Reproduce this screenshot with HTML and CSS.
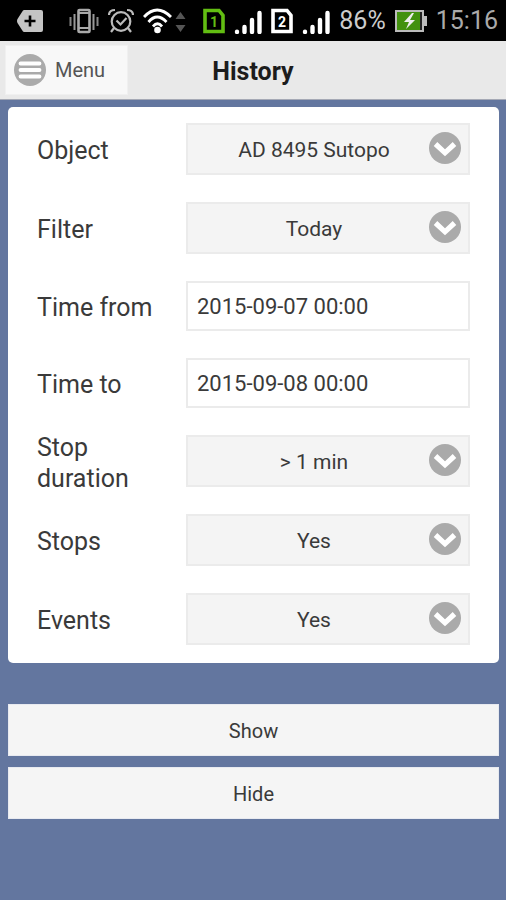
FILE: index.html
```html
<!DOCTYPE html>
<html lang="en">
<head>
<meta charset="utf-8">
<meta name="viewport" content="width=device-width, initial-scale=1">
<title>History</title>
<link rel="stylesheet" href="styles.css">
</head>
<body>
<svg class="defs" aria-hidden="true">
  <symbol id="arrow" viewBox="0 0 32 32">
    <circle cx="16" cy="16" r="16" fill="#aaa"/>
    <path d="M6.500 12 16 20.800 25.500 12" fill="none" stroke="#fff" stroke-width="5.200"/>
  </symbol>
  <symbol id="signal" viewBox="0 0 28 26">
    <g stroke="#fff" stroke-width="4.4" stroke-linecap="round">
      <path d="M3 23.800v.2M10.500 19v5M18 12v12M25.500 5v19"/>
    </g>
  </symbol>
</svg>

<div class="status">
  <svg class="status-add" width="26" height="22" viewBox="0 0 26 22" aria-hidden="true">
    <path d="M7 0h17q2 0 2 2v18q0 2-2 2H7q-1 0-2-2L.5 13q-1-2 0-4L5 2q1-2 2-2z" fill="#c4c4c4"/>
    <path d="M13 5.500v11M7.500 11h11" stroke="#000" stroke-width="2.600"/>
  </svg>
  <svg width="30" height="26" viewBox="0 0 30 26" aria-hidden="true">
    <rect x="9.500" y="2" width="11" height="22" rx="1" fill="none" stroke="#aaa" stroke-width="2.600"/>
    <path d="M10 5h10M10 20h10" stroke="#aaa" stroke-width="2"/>
    <path d="M5.500 6v16M24.500 6v16" stroke="#999" stroke-width="2"/>
    <path d="M1.500 9v9M28.500 9v9" stroke="#888" stroke-width="2"/>
  </svg>
  <svg width="26" height="26" viewBox="0 0 26 26" aria-hidden="true">
    <g fill="none" stroke="#bbb" stroke-width="2.200">
      <circle cx="13" cy="13.500" r="9.300"/>
      <path d="M8.500 12.500l4 4 6-6.500M6 20l-3 4M20 20l3 4"/>
      <path d="M1 7Q1 2 7 2M25 7Q25 2 19 2"/>
    </g>
  </svg>
  <svg width="43" height="26" viewBox="0 0 43 26" aria-hidden="true">
    <g fill="none" stroke="#fff" stroke-width="2.800">
      <path d="M1 9Q14 -5 28 9M5.500 14Q14 4 23.500 14M10 18.500Q14.500 13 19 18.500"/>
    </g>
    <circle cx="14.500" cy="22" r="3.300" fill="#fff"/>
    <path d="M37.500 4l5 7h-10zM37.500 24l5-7h-10z" fill="#555"/>
  </svg>
  <svg class="sim" width="22" height="26" viewBox="0 0 22 26" role="img" aria-label="SIM 1">
    <path d="M2 2.500h14l4 5v16H2z" fill="#000" stroke="#62bd12" stroke-width="3.600"/>
    <text class="sim-green" x="11" y="19">1</text>
  </svg>
  <svg width="28" height="26" aria-hidden="true"><use href="#signal"/></svg>
  <svg class="sim" width="22" height="26" viewBox="0 0 22 26" role="img" aria-label="SIM 2">
    <path d="M2 2.500h14l4 5v16H2z" fill="#000" stroke="#fff" stroke-width="3.600"/>
    <text class="sim-white" x="11" y="19">2</text>
  </svg>
  <svg width="28" height="26" aria-hidden="true"><use href="#signal"/></svg>
  <span class="level">86%</span>
  <svg width="32" height="22" viewBox="0 0 32 22" aria-hidden="true">
    <rect x="1" y="1" width="27" height="20" fill="#42910e" stroke="#bbb" stroke-width="2"/>
    <rect x="25" y="2" width="2" height="18" fill="#222"/>
    <rect x="29" y="6" width="3" height="10" fill="#bbb"/>
    <path d="M17 3 9 12h5l-3 7 9-9h-5l4-7z" fill="#eee"/>
  </svg>
  <span class="clock">15:16</span>
</div>

<header class="header">
  <button class="menu" type="button">
    <svg width="32" height="32" viewBox="0 0 32 32" aria-hidden="true">
      <circle cx="16" cy="16" r="16" fill="#aaa"/>
      <path d="M6.500 9.500h19M6.500 16h19M6.500 22.500h19" stroke="#fff" stroke-width="3.800" stroke-linecap="round"/>
    </svg>
    Menu
  </button>
  <h1 class="title">History</h1>
</header>

<main>
  <form class="form">
    <div class="card">
      <div class="row">
        <label for="object">Object</label>
        <div class="field"><select id="object"><option>AD 8495 Sutopo</option></select><svg class="arrow" aria-hidden="true"><use href="#arrow"/></svg></div>
      </div>
      <div class="row">
        <label for="filter">Filter</label>
        <div class="field"><select id="filter"><option>Today</option></select><svg class="arrow" aria-hidden="true"><use href="#arrow"/></svg></div>
      </div>
      <div class="row">
        <label for="from">Time from</label>
        <input id="from" type="text" value="2015-09-07 00:00">
      </div>
      <div class="row">
        <label for="to">Time to</label>
        <input id="to" type="text" value="2015-09-08 00:00">
      </div>
      <div class="row">
        <label class="two-line" for="duration">Stop duration</label>
        <div class="field"><select id="duration"><option>&gt; 1 min</option></select><svg class="arrow" aria-hidden="true"><use href="#arrow"/></svg></div>
      </div>
      <div class="row">
        <label for="stops">Stops</label>
        <div class="field"><select id="stops"><option>Yes</option><option>No</option></select><svg class="arrow" aria-hidden="true"><use href="#arrow"/></svg></div>
      </div>
      <div class="row">
        <label for="events">Events</label>
        <div class="field"><select id="events"><option>Yes</option><option>No</option></select><svg class="arrow" aria-hidden="true"><use href="#arrow"/></svg></div>
      </div>
    </div>
    <div class="actions">
      <button class="action" type="button">Show</button>
      <button class="action" type="button">Hide</button>
    </div>
  </form>
</main>
</body>
</html>
```

FILE: styles.css
```css
* {
  box-sizing: border-box;
}

body {
  margin: 0;
  min-height: 100vh;
  background: #63769f;
  color: #3a3a3a;
  font-family: Roboto, "Liberation Sans", sans-serif;
}

button,
input,
select {
  font-family: inherit;
  color: inherit;
}

.defs {
  position: absolute;
  width: 0;
  height: 0;
}

.status {
  display: flex;
  align-items: center;
  justify-content: flex-end;
  gap: 9px;
  height: 41px;
  padding: 0 8px 0 17px;
  background: #000;
  color: #ccc;
  font-size: 25px;
}

.status svg {
  flex: none;
}

.status .status-add {
  margin-right: auto;
}

.sim {
  margin-left: 8px;
}

.sim ~ .sim {
  margin-left: 0;
}

.sim text {
  font-size: 14px;
  font-weight: 700;
  text-anchor: middle;
}

.sim-green {
  fill: #62bd12;
}

.sim-white {
  fill: #fff;
}

.clock {
  color: #aaa;
}

.header {
  display: grid;
  grid-template-columns: 1fr auto 1fr;
  align-items: center;
  height: 59px;
  padding: 0 5px;
  background: #e9e9e9;
  border-bottom: 1px solid #a5a9b5;
}

.menu {
  display: flex;
  align-items: center;
  justify-self: start;
  gap: 9px;
  height: 50px;
  padding: 0 22px 0 8px;
  border: 1px solid #f0f0f0;
  background: #f8f8f8;
  color: #555;
  font-size: 20px;
}

.title {
  margin: 0;
  padding-top: 3px;
  color: #1c1c1c;
  font-size: 25px;
  font-weight: 700;
}

.form {
  padding: 7px 7px 0 8px;
}

.card {
  display: grid;
  gap: 27px;
  padding: 16px 29px 18px;
  border-radius: 5px;
  background: #fff;
}

.row {
  display: grid;
  grid-template-columns: 149px 1fr;
  align-items: center;
}

.row label {
  padding: 3px 24px 0 0;
  font-size: 25px;
  line-height: 31px;
}

.row .two-line {
  margin: -7px 0;
}

.field {
  position: relative;
  display: grid;
}

.row select,
.row input {
  width: 100%;
  min-width: 0;
  margin: 0;
  border: 2px solid #ebebeb;
  border-radius: 0;
}

.row select {
  height: 52px;
  padding: 2px 28px 0 0;
  appearance: none;
  background: #f4f4f4;
  font-size: 21px;
  text-align: center;
  text-align-last: center;
}

.row input {
  height: 50px;
  padding: 1px 9px 0;
  background: #fff;
  font-size: 22px;
}

.arrow {
  position: absolute;
  top: 9px;
  right: 9px;
  width: 32px;
  height: 32px;
  pointer-events: none;
}

.actions {
  display: grid;
  gap: 11px;
  margin-top: 41px;
}

.action {
  height: 52px;
  padding-top: 3px;
  border: 1px solid #e8eaf0;
  background: #f5f5f5;
  font-size: 20px;
}
```
